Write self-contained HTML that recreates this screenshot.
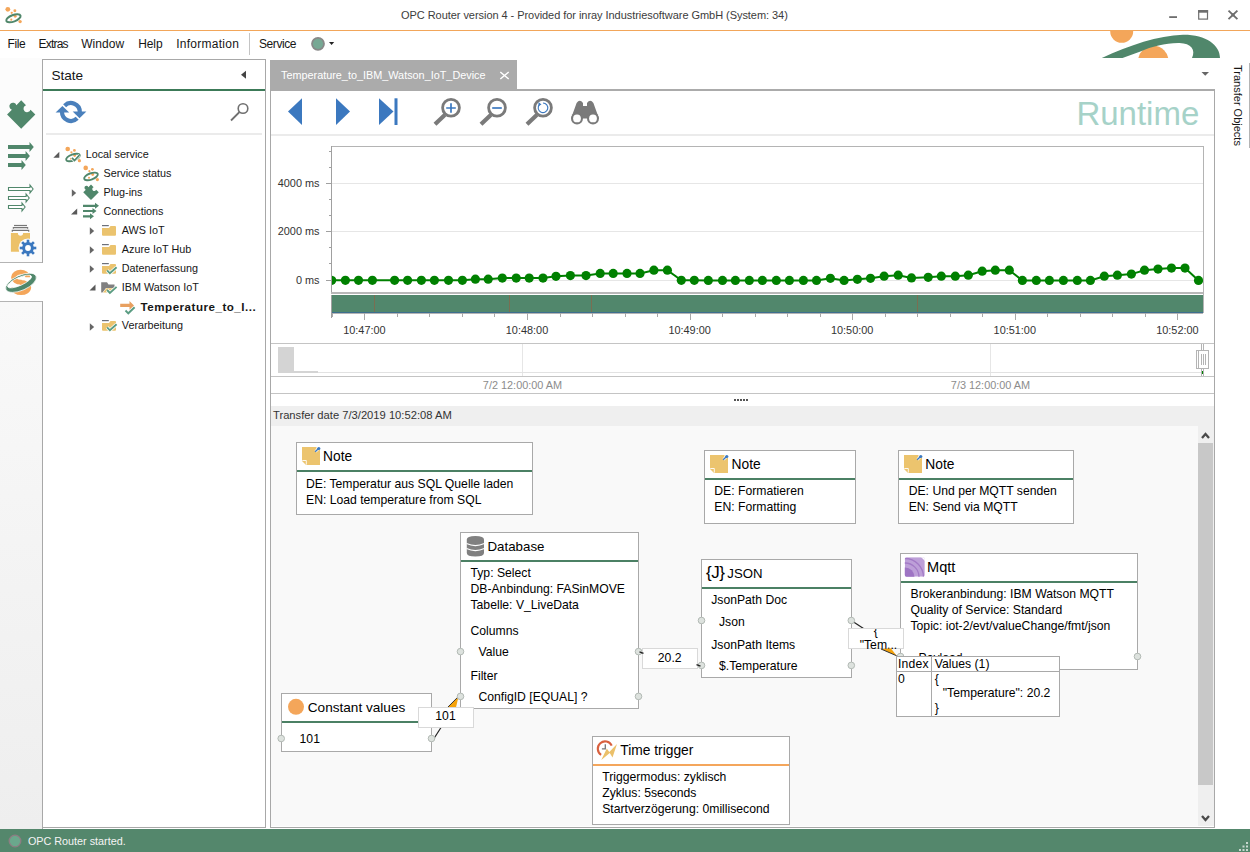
<!DOCTYPE html>
<html><head><meta charset="utf-8">
<style>
html,body{margin:0;padding:0;}
body{width:1250px;height:852px;position:relative;overflow:hidden;background:#fff;font-family:"Liberation Sans",sans-serif;color:#222;}
.a{position:absolute;}
.t{position:absolute;white-space:nowrap;line-height:1;}
svg.s{position:absolute;left:0;top:0;overflow:visible;}
</style></head><body>
<div class="t" style="left:401.0px;top:9.89px;font-size:11px;color:#3c3c3c;letter-spacing:-0.05px;">OPC Router version 4 - Provided for inray Industriesoftware GmbH (System: 34)</div>
<div class="a" style="left:0px;top:30px;width:1250px;height:1px;background:#f2a65a;"></div>
<div class="t" style="left:7.5px;top:37.54px;font-size:12px;color:#161616;letter-spacing:-0.4px;">File</div>
<div class="t" style="left:38.5px;top:37.54px;font-size:12px;color:#161616;letter-spacing:-0.8px;">Extras</div>
<div class="t" style="left:81.2px;top:37.54px;font-size:12px;color:#161616;letter-spacing:0.08px;">Window</div>
<div class="t" style="left:138.2px;top:37.54px;font-size:12px;color:#161616;letter-spacing:-0.1px;">Help</div>
<div class="t" style="left:176.2px;top:37.54px;font-size:12px;color:#161616;letter-spacing:0.27px;">Information</div>
<div class="t" style="left:259.0px;top:37.54px;font-size:12px;color:#161616;letter-spacing:-0.43px;">Service</div>
<div class="a" style="left:249px;top:33px;width:1px;height:22px;background:#c4c4c4;"></div>
<div class="a" style="left:0px;top:58px;width:42px;height:204px;background:#fcfcfc;"></div>
<div class="a" style="left:0px;top:262px;width:42px;height:1px;background:#b4b4b4;"></div>
<div class="a" style="left:0px;top:301px;width:42px;height:1px;background:#b4b4b4;"></div>
<div class="a" style="left:0px;top:302px;width:42px;height:527px;background:linear-gradient(#f9f9f9,#eeeeee);"></div>
<div class="a" style="left:42px;top:59px;width:1px;height:203px;background:#a8a8a8;"></div>
<div class="a" style="left:42px;top:301px;width:1px;height:528px;background:#a8a8a8;"></div>
<div class="a" style="left:42px;top:59px;width:224px;height:769px;background:#fff;box-sizing:border-box;border:1px solid #a8a8a8;"></div>
<div class="a" style="left:42px;top:263px;width:1px;height:38px;background:#fff;"></div>
<div class="t" style="left:51.4px;top:68.79px;font-size:13.6px;color:#161616;">State</div>
<div class="a" style="left:43px;top:89px;width:222px;height:2px;background:#3c7a58;"></div>
<div class="a" style="left:46px;top:133px;width:216px;height:2px;background:#ebebeb;"></div>
<div class="t" style="left:85.7px;top:148.56px;font-size:10.8px;color:#161616;">Local service</div>
<div class="t" style="left:103.5px;top:167.56px;font-size:10.8px;color:#161616;">Service status</div>
<div class="t" style="left:103.5px;top:186.56px;font-size:10.8px;color:#161616;">Plug-ins</div>
<div class="t" style="left:103.5px;top:205.56px;font-size:10.8px;color:#161616;">Connections</div>
<div class="t" style="left:121.8px;top:224.56px;font-size:10.8px;color:#161616;">AWS IoT</div>
<div class="t" style="left:121.8px;top:243.56px;font-size:10.8px;color:#161616;">Azure IoT Hub</div>
<div class="t" style="left:121.8px;top:262.56px;font-size:10.8px;color:#161616;">Datenerfassung</div>
<div class="t" style="left:121.8px;top:281.56px;font-size:10.8px;color:#161616;">IBM Watson IoT</div>
<div class="t" style="left:140.6px;top:300.68px;font-size:11.6px;color:#161616;font-weight:bold;letter-spacing:0.5px;">Temperature_to_I...</div>
<div class="t" style="left:121.8px;top:319.56px;font-size:10.8px;color:#161616;">Verarbeitung</div>
<div class="a" style="left:270px;top:60px;width:247px;height:30px;background:#ababab;"></div>
<div class="t" style="left:281.0px;top:69.92px;font-size:10.85px;color:#fff;">Temperature_to_IBM_Watson_IoT_Device</div>
<div class="a" style="left:270px;top:89px;width:945px;height:739px;background:#fff;box-sizing:border-box;border:1px solid #a8a8a8;border-top:2px solid #ababab;"></div>
<div class="a" style="left:271px;top:134px;width:943px;height:2px;background:#ebebeb;"></div>
<div class="t" style="left:1076.4px;top:97.07px;font-size:33px;color:#a6d2c8;">Runtime</div>
<div class="t" style="left:1232.0px;top:64.99px;font-size:11px;color:#161616;transform-origin:0 0;transform:rotate(90deg) translateY(-11px);">Transfer Objects</div>
<div class="a" style="left:0px;top:829px;width:1250px;height:23px;background:#54876c;"></div>
<div class="t" style="left:27.9px;top:835.86px;font-size:10.8px;color:#f4f4f4;">OPC Router started.</div>
<svg class="s" width="1250" height="852" shape-rendering="crispEdges"><rect x="331.5" y="146.5" width="871.5" height="166" fill="#fff" stroke="#b4b4b4" stroke-width="1"/><line x1="332" y1="183.5" x2="1203" y2="183.5" stroke="#e6e6e6"/><line x1="332" y1="231.5" x2="1203" y2="231.5" stroke="#e6e6e6"/><line x1="332" y1="280.5" x2="1203" y2="280.5" stroke="#e6e6e6"/><line x1="329" y1="167.5" x2="331" y2="167.5" stroke="#a0a0a0"/><line x1="329" y1="199.5" x2="331" y2="199.5" stroke="#a0a0a0"/><line x1="329" y1="215.5" x2="331" y2="215.5" stroke="#a0a0a0"/><line x1="329" y1="247.5" x2="331" y2="247.5" stroke="#a0a0a0"/><line x1="329" y1="263.5" x2="331" y2="263.5" stroke="#a0a0a0"/><line x1="329" y1="151.5" x2="331" y2="151.5" stroke="#a0a0a0"/><line x1="326" y1="183.5" x2="331" y2="183.5" stroke="#a0a0a0"/><line x1="326" y1="231.5" x2="331" y2="231.5" stroke="#a0a0a0"/><line x1="326" y1="280.5" x2="331" y2="280.5" stroke="#a0a0a0"/><line x1="331.5" y1="146" x2="331.5" y2="313" stroke="#a0a0a0"/><rect x="331" y="292" width="872" height="2" fill="#b8b8b8"/><rect x="331" y="294" width="872" height="1" fill="#fff"/><rect x="332" y="295" width="871" height="17" fill="#51876c"/><rect x="332" y="312" width="871" height="1" fill="#3d6f8e"/><rect x="374" y="295" width="1" height="17" fill="#7a6e52"/><rect x="509" y="295" width="1" height="17" fill="#7a6e52"/><rect x="591" y="295" width="1" height="17" fill="#7a6e52"/><rect x="917" y="295" width="1" height="17" fill="#7a6e52"/><line x1="331" y1="313.5" x2="1203" y2="313.5" stroke="#b4b4b4"/><line x1="331.5" y1="313" x2="331.5" y2="318" stroke="#a0a0a0"/><line x1="332.5" y1="313" x2="332.5" y2="317" stroke="#a8a8a8"/><line x1="364.5" y1="313" x2="364.5" y2="320" stroke="#a8a8a8"/><line x1="397.5" y1="313" x2="397.5" y2="317" stroke="#a8a8a8"/><line x1="429.5" y1="313" x2="429.5" y2="317" stroke="#a8a8a8"/><line x1="462.5" y1="313" x2="462.5" y2="317" stroke="#a8a8a8"/><line x1="494.5" y1="313" x2="494.5" y2="317" stroke="#a8a8a8"/><line x1="527.5" y1="313" x2="527.5" y2="320" stroke="#a8a8a8"/><line x1="560.5" y1="313" x2="560.5" y2="317" stroke="#a8a8a8"/><line x1="592.5" y1="313" x2="592.5" y2="317" stroke="#a8a8a8"/><line x1="625.5" y1="313" x2="625.5" y2="317" stroke="#a8a8a8"/><line x1="657.5" y1="313" x2="657.5" y2="317" stroke="#a8a8a8"/><line x1="690.5" y1="313" x2="690.5" y2="320" stroke="#a8a8a8"/><line x1="722.5" y1="313" x2="722.5" y2="317" stroke="#a8a8a8"/><line x1="755.5" y1="313" x2="755.5" y2="317" stroke="#a8a8a8"/><line x1="787.5" y1="313" x2="787.5" y2="317" stroke="#a8a8a8"/><line x1="820.5" y1="313" x2="820.5" y2="317" stroke="#a8a8a8"/><line x1="852.5" y1="313" x2="852.5" y2="320" stroke="#a8a8a8"/><line x1="885.5" y1="313" x2="885.5" y2="317" stroke="#a8a8a8"/><line x1="917.5" y1="313" x2="917.5" y2="317" stroke="#a8a8a8"/><line x1="950.5" y1="313" x2="950.5" y2="317" stroke="#a8a8a8"/><line x1="982.5" y1="313" x2="982.5" y2="317" stroke="#a8a8a8"/><line x1="1015.5" y1="313" x2="1015.5" y2="320" stroke="#a8a8a8"/><line x1="1047.5" y1="313" x2="1047.5" y2="317" stroke="#a8a8a8"/><line x1="1080.5" y1="313" x2="1080.5" y2="317" stroke="#a8a8a8"/><line x1="1112.5" y1="313" x2="1112.5" y2="317" stroke="#a8a8a8"/><line x1="1145.5" y1="313" x2="1145.5" y2="317" stroke="#a8a8a8"/><line x1="1177.5" y1="313" x2="1177.5" y2="320" stroke="#a8a8a8"/></svg>
<div class="t" style="left:319.5px;top:178.07px;font-size:10.9px;color:#333;transform:translateX(-100%);">4000 ms</div>
<div class="t" style="left:319.5px;top:226.27px;font-size:10.9px;color:#333;transform:translateX(-100%);">2000 ms</div>
<div class="t" style="left:319.5px;top:275.17px;font-size:10.9px;color:#333;transform:translateX(-100%);">0 ms</div>
<div class="t" style="left:364.4px;top:324.57px;font-size:10.9px;color:#333;transform:translateX(-50%);">10:47:00</div>
<div class="t" style="left:527.0px;top:324.57px;font-size:10.9px;color:#333;transform:translateX(-50%);">10:48:00</div>
<div class="t" style="left:689.6px;top:324.57px;font-size:10.9px;color:#333;transform:translateX(-50%);">10:49:00</div>
<div class="t" style="left:852.2px;top:324.57px;font-size:10.9px;color:#333;transform:translateX(-50%);">10:50:00</div>
<div class="t" style="left:1014.8px;top:324.57px;font-size:10.9px;color:#333;transform:translateX(-50%);">10:51:00</div>
<div class="t" style="left:1177.4px;top:324.57px;font-size:10.9px;color:#333;transform:translateX(-50%);">10:52:00</div>
<svg class="s" width="1250" height="852"><defs><clipPath id="cc"><rect x="332" y="146" width="871" height="146"/></clipPath></defs><g clip-path="url(#cc)"><path d="M331.7,280.3 L345.4,280.3 L358.5,280.3 L372.4,280.3 L394.6,280.3 L407.6,280.3 L421.4,280.3 L434.4,280.3 L448.5,280.3 L462.4,280.3 L475.4,279.2 L488.2,279.2 L502.3,278.1 L516.2,278.1 L529.2,278.1 L543.0,278.1 L556.0,276.3 L570.4,275.6 L586.0,275.6 L600.2,273.4 L613.2,273.4 L627.0,273.4 L640.0,273.4 L653.9,270.2 L667.4,270.2 L681.3,280.3 L694.3,280.3 L708.3,280.4 L722.5,280.4 L735.4,280.4 L749.3,280.4 L762.4,280.4 L776.3,280.4 L789.4,280.4 L803.4,280.4 L816.5,280.4 L830.4,278.3 L844.1,280.4 L857.4,279.3 L870.5,278.3 L884.1,276.2 L898.2,275.2 L911.5,277.9 L928.2,277.3 L941.3,276.2 L955.3,276.2 L968.3,275.2 L982.2,271.2 L995.3,270.2 L1009.3,270.2 L1022.4,280.4 L1036.3,280.4 L1049.4,280.4 L1063.4,280.4 L1077.3,280.4 L1090.4,280.4 L1104.3,276.2 L1117.4,275.2 L1131.4,274.1 L1144.5,270.2 L1158.0,269.1 L1171.5,268.1 L1185.0,268.1 L1198.5,280.4" fill="none" stroke="#008000" stroke-width="2"/><g fill="#008000"><circle cx="331.7" cy="280.3" r="4.6"/><circle cx="345.4" cy="280.3" r="4.6"/><circle cx="358.5" cy="280.3" r="4.6"/><circle cx="372.4" cy="280.3" r="4.6"/><circle cx="394.6" cy="280.3" r="4.6"/><circle cx="407.6" cy="280.3" r="4.6"/><circle cx="421.4" cy="280.3" r="4.6"/><circle cx="434.4" cy="280.3" r="4.6"/><circle cx="448.5" cy="280.3" r="4.6"/><circle cx="462.4" cy="280.3" r="4.6"/><circle cx="475.4" cy="279.2" r="4.6"/><circle cx="488.2" cy="279.2" r="4.6"/><circle cx="502.3" cy="278.1" r="4.6"/><circle cx="516.2" cy="278.1" r="4.6"/><circle cx="529.2" cy="278.1" r="4.6"/><circle cx="543.0" cy="278.1" r="4.6"/><circle cx="556.0" cy="276.3" r="4.6"/><circle cx="570.4" cy="275.6" r="4.6"/><circle cx="586.0" cy="275.6" r="4.6"/><circle cx="600.2" cy="273.4" r="4.6"/><circle cx="613.2" cy="273.4" r="4.6"/><circle cx="627.0" cy="273.4" r="4.6"/><circle cx="640.0" cy="273.4" r="4.6"/><circle cx="653.9" cy="270.2" r="4.6"/><circle cx="667.4" cy="270.2" r="4.6"/><circle cx="681.3" cy="280.3" r="4.6"/><circle cx="694.3" cy="280.3" r="4.6"/><circle cx="708.3" cy="280.4" r="4.6"/><circle cx="722.5" cy="280.4" r="4.6"/><circle cx="735.4" cy="280.4" r="4.6"/><circle cx="749.3" cy="280.4" r="4.6"/><circle cx="762.4" cy="280.4" r="4.6"/><circle cx="776.3" cy="280.4" r="4.6"/><circle cx="789.4" cy="280.4" r="4.6"/><circle cx="803.4" cy="280.4" r="4.6"/><circle cx="816.5" cy="280.4" r="4.6"/><circle cx="830.4" cy="278.3" r="4.6"/><circle cx="844.1" cy="280.4" r="4.6"/><circle cx="857.4" cy="279.3" r="4.6"/><circle cx="870.5" cy="278.3" r="4.6"/><circle cx="884.1" cy="276.2" r="4.6"/><circle cx="898.2" cy="275.2" r="4.6"/><circle cx="911.5" cy="277.9" r="4.6"/><circle cx="928.2" cy="277.3" r="4.6"/><circle cx="941.3" cy="276.2" r="4.6"/><circle cx="955.3" cy="276.2" r="4.6"/><circle cx="968.3" cy="275.2" r="4.6"/><circle cx="982.2" cy="271.2" r="4.6"/><circle cx="995.3" cy="270.2" r="4.6"/><circle cx="1009.3" cy="270.2" r="4.6"/><circle cx="1022.4" cy="280.4" r="4.6"/><circle cx="1036.3" cy="280.4" r="4.6"/><circle cx="1049.4" cy="280.4" r="4.6"/><circle cx="1063.4" cy="280.4" r="4.6"/><circle cx="1077.3" cy="280.4" r="4.6"/><circle cx="1090.4" cy="280.4" r="4.6"/><circle cx="1104.3" cy="276.2" r="4.6"/><circle cx="1117.4" cy="275.2" r="4.6"/><circle cx="1131.4" cy="274.1" r="4.6"/><circle cx="1144.5" cy="270.2" r="4.6"/><circle cx="1158.0" cy="269.1" r="4.6"/><circle cx="1171.5" cy="268.1" r="4.6"/><circle cx="1185.0" cy="268.1" r="4.6"/><circle cx="1198.5" cy="280.4" r="4.6"/></g></g></svg>
<svg class="s" width="1250" height="852" shape-rendering="crispEdges"><rect x="271" y="343" width="943" height="1" fill="#c4c4c4"/><rect x="271" y="376" width="943" height="1" fill="#c4c4c4"/><rect x="271" y="393" width="943" height="1" fill="#c4c4c4"/><rect x="522" y="344" width="1" height="32" fill="#e6e6e6"/><rect x="990" y="344" width="1" height="32" fill="#e6e6e6"/><rect x="278" y="347" width="16" height="26" fill="#d4d4d4"/><rect x="294" y="371" width="24" height="2" fill="#d4d4d4"/><rect x="318" y="372" width="883" height="1" fill="#e2e2e2"/><rect x="1201" y="344" width="1" height="6" fill="#b4b4b4"/><rect x="1203" y="344" width="1" height="6" fill="#b4b4b4"/><rect x="1201" y="369" width="1" height="7" fill="#b4b4b4"/><rect x="1203" y="369" width="1" height="7" fill="#b4b4b4"/><rect x="1196.5" y="350.5" width="12" height="18" fill="#fff" stroke="#b4b4b4"/><rect x="1198" y="351" width="1" height="17" fill="#b4b4b4"/><rect x="1201" y="354" width="1" height="11" fill="#b4b4b4"/><rect x="1203" y="354" width="1" height="11" fill="#b4b4b4"/><rect x="1205" y="354" width="1" height="11" fill="#b4b4b4"/><rect x="1202" y="371" width="1" height="3" fill="#008000"/></svg>
<div class="t" style="left:522.5px;top:379.77px;font-size:10.9px;color:#8c8c8c;transform:translateX(-50%);">7/2 12:00:00 AM</div>
<div class="t" style="left:990.5px;top:379.77px;font-size:10.9px;color:#8c8c8c;transform:translateX(-50%);">7/3 12:00:00 AM</div>
<svg class="s" width="1250" height="852" shape-rendering="crispEdges"><g fill="#555"><rect x="734" y="399" width="1.5" height="1.5"/><rect x="737" y="399" width="1.5" height="1.5"/><rect x="740" y="399" width="1.5" height="1.5"/><rect x="743" y="399" width="1.5" height="1.5"/><rect x="746" y="399" width="1.5" height="1.5"/></g></svg>
<div class="a" style="left:271px;top:406px;width:943px;height:20px;background:#efefef;"></div>
<div class="t" style="left:273.0px;top:410.32px;font-size:11.2px;color:#333;">Transfer date 7/3/2019 10:52:08 AM</div>
<div class="a" style="left:271px;top:426px;width:927px;height:400px;background:#f9f9f9;"></div>
<div class="a" style="left:1198px;top:426px;width:16px;height:400px;background:#efefef;"></div>
<div class="a" style="left:1198px;top:443px;width:15px;height:342px;background:#c8c8c8;"></div>
<svg class="s" width="1250" height="852"><path d="M1202,438 L1205.5,434 L1209,438" fill="none" stroke="#4a4a4a" stroke-width="2.3"/><path d="M1202,816 L1205.5,820 L1209,816" fill="none" stroke="#4a4a4a" stroke-width="2.3"/></svg>
<svg class="s" width="1250" height="852"><path d="M433.8,738.8 L441,727.5" stroke="#222" stroke-width="1.2" fill="none"/><path d="M447.4,707.6 L458.5,696.4 L456,707.6 Z" fill="#f5a20a" stroke="none"/><path d="M447.4,707.6 L458.5,696.4" stroke="#333" stroke-width="1" fill="none"/><path d="M639,652 L642.5,653.5" stroke="#222" stroke-width="1" fill="none"/><path d="M697.5,665 L701,666" stroke="#222" stroke-width="1" fill="none"/><path d="M851.3,620.5 L863.5,628.5" stroke="#222" stroke-width="1.2" fill="none"/></svg>
<div class="a" style="left:296px;top:442px;width:237px;height:73px;background:#fff;box-sizing:border-box;border:1px solid #a9a9a9;"></div>
<div class="a" style="left:297px;top:470px;width:235px;height:2px;background:#4b8064;"></div>
<div class="t" style="left:323.0px;top:450.32px;font-size:13.8px;color:#000;">Note</div>
<div class="t" style="left:306.0px;top:477.67px;font-size:12.2px;color:#000;">DE: Temperatur aus SQL Quelle laden</div>
<div class="t" style="left:306.0px;top:493.67px;font-size:12.2px;color:#000;">EN: Load temperature from SQL</div>
<div class="a" style="left:704px;top:450px;width:152px;height:74px;background:#fff;box-sizing:border-box;border:1px solid #a9a9a9;"></div>
<div class="a" style="left:705px;top:478px;width:150px;height:2px;background:#4b8064;"></div>
<div class="t" style="left:731.5px;top:458.02px;font-size:13.8px;color:#000;">Note</div>
<div class="t" style="left:714.3px;top:485.27px;font-size:12.2px;color:#000;">DE: Formatieren</div>
<div class="t" style="left:714.3px;top:501.07px;font-size:12.2px;color:#000;">EN: Formatting</div>
<div class="a" style="left:898px;top:450px;width:176px;height:74px;background:#fff;box-sizing:border-box;border:1px solid #a9a9a9;"></div>
<div class="a" style="left:899px;top:478px;width:174px;height:2px;background:#4b8064;"></div>
<div class="t" style="left:925.3px;top:458.02px;font-size:13.8px;color:#000;">Note</div>
<div class="t" style="left:908.7px;top:485.27px;font-size:12.2px;color:#000;">DE: Und per MQTT senden</div>
<div class="t" style="left:908.7px;top:501.07px;font-size:12.2px;color:#000;">EN: Send via MQTT</div>
<div class="a" style="left:460px;top:532px;width:179px;height:177px;background:#fff;box-sizing:border-box;border:1px solid #a9a9a9;"></div>
<div class="a" style="left:461px;top:560px;width:177px;height:2px;background:#4b8064;"></div>
<div class="t" style="left:487.5px;top:540.34px;font-size:13.3px;color:#000;">Database</div>
<div class="t" style="left:470.5px;top:567.37px;font-size:12.2px;color:#000;">Typ: Select</div>
<div class="t" style="left:470.5px;top:583.27px;font-size:12.2px;color:#000;">DB-Anbindung: FASinMOVE</div>
<div class="t" style="left:470.5px;top:599.27px;font-size:12.2px;color:#000;">Tabelle: V_LiveData</div>
<div class="t" style="left:470.5px;top:624.97px;font-size:12.2px;color:#000;">Columns</div>
<div class="t" style="left:478.5px;top:646.07px;font-size:12.2px;color:#000;">Value</div>
<div class="t" style="left:470.5px;top:669.97px;font-size:12.2px;color:#000;">Filter</div>
<div class="t" style="left:478.5px;top:691.37px;font-size:12.2px;color:#000;">ConfigID [EQUAL] ?</div>
<div class="a" style="left:701px;top:559px;width:151px;height:119px;background:#fff;box-sizing:border-box;border:1px solid #a9a9a9;"></div>
<div class="a" style="left:702px;top:587px;width:149px;height:2px;background:#4b8064;"></div>
<div class="t" style="left:706.0px;top:564.11px;font-size:17px;color:#000;letter-spacing:-0.5px;">{J}</div>
<div class="t" style="left:727.3px;top:567.13px;font-size:13.2px;color:#000;">JSON</div>
<div class="t" style="left:711.2px;top:594.47px;font-size:12.2px;color:#000;">JsonPath Doc</div>
<div class="t" style="left:719.0px;top:615.67px;font-size:12.2px;color:#000;">Json</div>
<div class="t" style="left:711.2px;top:639.27px;font-size:12.2px;color:#000;">JsonPath Items</div>
<div class="t" style="left:719.0px;top:660.47px;font-size:12.2px;color:#000;">$.Temperature</div>
<div class="a" style="left:900px;top:553px;width:238px;height:117px;background:#fff;box-sizing:border-box;border:1px solid #a9a9a9;"></div>
<div class="a" style="left:901px;top:581px;width:236px;height:2px;background:#4b8064;"></div>
<div class="t" style="left:927.0px;top:560.04px;font-size:14.6px;color:#000;">Mqtt</div>
<div class="t" style="left:910.5px;top:588.07px;font-size:12.2px;color:#000;">Brokeranbindung: IBM Watson MQTT</div>
<div class="t" style="left:910.5px;top:604.27px;font-size:12.2px;color:#000;">Quality of Service: Standard</div>
<div class="t" style="left:910.5px;top:620.17px;font-size:12.2px;color:#000;">Topic: iot-2/evt/valueChange/fmt/json</div>
<div class="t" style="left:918.5px;top:651.67px;font-size:12.2px;color:#000;">Payload</div>
<div class="a" style="left:281px;top:693px;width:151px;height:59px;background:#fff;box-sizing:border-box;border:1px solid #a9a9a9;"></div>
<div class="a" style="left:282px;top:721px;width:149px;height:2px;background:#4b8064;"></div>
<div class="t" style="left:307.8px;top:700.69px;font-size:13.6px;color:#000;">Constant values</div>
<div class="t" style="left:299.6px;top:733.07px;font-size:12.2px;color:#000;">101</div>
<div class="a" style="left:592px;top:736px;width:198px;height:89px;background:#fff;box-sizing:border-box;border:1px solid #a9a9a9;"></div>
<div class="a" style="left:593px;top:764px;width:196px;height:2px;background:#f4a65c;"></div>
<div class="t" style="left:620.3px;top:744.32px;font-size:13.8px;color:#000;">Time trigger</div>
<div class="t" style="left:602.2px;top:771.37px;font-size:12.2px;color:#000;">Triggermodus: zyklisch</div>
<div class="t" style="left:602.2px;top:786.87px;font-size:12.2px;color:#000;">Zyklus: 5seconds</div>
<div class="t" style="left:602.2px;top:803.27px;font-size:12.2px;color:#000;">Startverzögerung: 0millisecond</div>
<svg class="s" width="1250" height="852"><circle cx="460.5" cy="651.6" r="3.3" fill="#dde2de" stroke="#b3bab5" stroke-width="1"/><circle cx="460.5" cy="696.4" r="3.3" fill="#dde2de" stroke="#b3bab5" stroke-width="1"/><circle cx="638.5" cy="651.6" r="3.3" fill="#dde2de" stroke="#b3bab5" stroke-width="1"/><circle cx="638.5" cy="696.4" r="3.3" fill="#dde2de" stroke="#b3bab5" stroke-width="1"/><circle cx="701.5" cy="620.5" r="3.3" fill="#dde2de" stroke="#b3bab5" stroke-width="1"/><circle cx="701.5" cy="665.4" r="3.3" fill="#dde2de" stroke="#b3bab5" stroke-width="1"/><circle cx="851.3" cy="620.5" r="3.3" fill="#dde2de" stroke="#b3bab5" stroke-width="1"/><circle cx="851.3" cy="665.4" r="3.3" fill="#dde2de" stroke="#b3bab5" stroke-width="1"/><circle cx="281.2" cy="738.5" r="3.3" fill="#dde2de" stroke="#b3bab5" stroke-width="1"/><circle cx="431.5" cy="738.5" r="3.3" fill="#dde2de" stroke="#b3bab5" stroke-width="1"/><circle cx="900.5" cy="656.5" r="3.3" fill="#dde2de" stroke="#b3bab5" stroke-width="1"/><circle cx="1137.5" cy="656.5" r="3.3" fill="#dde2de" stroke="#b3bab5" stroke-width="1"/></svg>
<div class="a" style="left:418px;top:707px;width:56px;height:21px;background:#fff;box-sizing:border-box;border:1px solid #d9d9d9;"></div>
<div class="t" style="left:445.5px;top:710.27px;font-size:12.2px;color:#000;transform:translateX(-50%);">101</div>
<div class="a" style="left:642px;top:648px;width:56px;height:21px;background:#fff;box-sizing:border-box;border:1px solid #d9d9d9;"></div>
<div class="t" style="left:669.7px;top:651.67px;font-size:12.2px;color:#000;transform:translateX(-50%);">20.2</div>
<svg class="s" width="1250" height="852"><path d="M639.5,651.8 L643.5,653.3 M696.5,664.6 L700.5,666.2" stroke="#222" stroke-width="1.3" fill="none"/></svg>
<div class="a" style="left:848px;top:628px;width:56px;height:21px;background:#fff;box-sizing:border-box;border:1px solid #d9d9d9;"></div>
<div class="a" style="left:849px;top:629px;width:60px;height:30px;overflow:hidden"><div class="t" style="left:24.8px;top:-4.03px;font-size:12.2px;color:#000;">{</div>
<div class="t" style="left:10.7px;top:10.07px;font-size:12.2px;color:#000;">"Tem...</div>
</div>
<svg class="s" width="1250" height="852"><path d="M881,649 L896.7,655.8 L891,648.6 Z" fill="#f5a20a"/><path d="M881,649 L896.7,655.8" stroke="#333" stroke-width="1" fill="none"/></svg>
<div class="a" style="left:896px;top:656px;width:164px;height:61px;box-sizing:border-box;border:1px solid #a9a9a9;background:#fff"></div>
<div class="a" style="left:897px;top:671px;width:162px;height:1px;background:#a9a9a9;"></div>
<div class="a" style="left:931px;top:657px;width:1px;height:59px;background:#a9a9a9;"></div>
<div class="t" style="left:898.0px;top:658.17px;font-size:12.2px;color:#000;letter-spacing:0.2px;">Index</div>
<div class="t" style="left:934.8px;top:658.17px;font-size:12.2px;color:#000;">Values (1)</div>
<div class="t" style="left:898.0px;top:672.97px;font-size:12.2px;color:#000;">0</div>
<div class="t" style="left:934.8px;top:672.97px;font-size:12.2px;color:#000;">{</div>
<div class="t" style="left:942.8px;top:687.27px;font-size:12.2px;color:#000;">"Temperature": 20.2</div>
<div class="t" style="left:934.8px;top:702.07px;font-size:12.2px;color:#000;">}</div>
<svg class="s" width="1250" height="852"><g transform="translate(5,6.5) scale(1.05)"><g fill="#f4a65a"><circle cx="2.7" cy="2.7" r="2.3"/><circle cx="9.4" cy="4.1" r="1.4"/><circle cx="6.4" cy="6" r="1.1"/><circle cx="9.7" cy="9.3" r="1.4"/><circle cx="14.4" cy="14.4" r="1.6"/><circle cx="6" cy="12.5" r="1"/></g><ellipse cx="8" cy="11.2" rx="7.2" ry="3.1" transform="rotate(-20 8 11.2)" fill="none" stroke="#50876b" stroke-width="1.9"/></g><rect x="1169.2" y="16.2" width="7.8" height="1.8" fill="#6e6e6e"/><rect x="1198.7" y="10.7" width="8.8" height="8.4" fill="none" stroke="#6e6e6e" stroke-width="1.2"/><rect x="1198.1" y="10.1" width="10" height="2.6" fill="#6e6e6e"/><path d="M1228.5,10.6 L1237.4,19.1 M1237.4,10.6 L1228.5,19.1" stroke="#6e6e6e" stroke-width="1.9"/><rect x="1231.5" y="13.4" width="3" height="3" fill="#6e6e6e"/><circle cx="318" cy="43.8" r="6" fill="#77a894" stroke="#888" stroke-width="1.8"/><path d="M329,42 L334.2,42 L331.6,45 Z" fill="#222"/><defs><clipPath id="lg"><rect x="1095" y="31" width="130" height="27"/></clipPath></defs><g clip-path="url(#lg)"><circle cx="1121.7" cy="31.3" r="11.5" fill="#f4a65a"/><circle cx="1153.3" cy="61" r="15.2" fill="#f4a65a"/><path d="M1101.8,58 C1130,45 1158,35.5 1183,34.7 C1206,34.5 1220,45 1220,58 L1192,58 C1196,50 1191,43.5 1179.6,43.1 C1166,42.8 1152,46.5 1140.4,51.5 L1122.5,58 Z" fill="#50876b"/></g><path d="M500.3,72 L508.7,79 M508.7,72 L500.3,79" stroke="#fff" stroke-width="1.5"/><path d="M1201.5,72 L1209,72 L1205.25,75.8 Z" fill="#666"/><rect x="1249" y="63" width="1" height="85" fill="#b4b4b4"/><g transform="translate(21.2,114.5) rotate(-45)" fill="#50876b"><path d="M-10,-10 L-3.2,-10 A3.6,3.6 0 1 1 3.2,-10 L10,-10 L10,-3.2 A3.6,3.6 0 1 0 10,3.2 L10,10 L-10,10 Z"/></g><path d="M8,145 L29.499999999999996,145 L29.499999999999996,142 L33.8,147 L29.499999999999996,152 L29.499999999999996,149 L8,149 Z" fill="#50876b" transform="translate(0,0)"/><path d="M8,154 L25.599999999999998,154 L25.599999999999998,151 L29.9,156 L25.599999999999998,161 L25.599999999999998,158 L8,158 Z" fill="#50876b" transform="translate(0,0)"/><path d="M8,163 L21.5,163 L21.5,160 L25.8,165 L21.5,170 L21.5,167 L8,167 Z" fill="#50876b" transform="translate(0,0)"/><path d="M8.5,145.5 L29.999999999999996,145.5 L29.999999999999996,143 L33.099999999999994,147 L29.999999999999996,151 L29.999999999999996,148.5 L8.5,148.5 Z" fill="#fff" stroke="#50876b" stroke-width="1.1" transform="translate(0,42)"/><path d="M8.5,154.5 L26.099999999999998,154.5 L26.099999999999998,152 L29.2,156 L26.099999999999998,160 L26.099999999999998,157.5 L8.5,157.5 Z" fill="#fff" stroke="#50876b" stroke-width="1.1" transform="translate(0,42)"/><path d="M8.5,163.5 L22.0,163.5 L22.0,161 L25.1,165 L22.0,169 L22.0,166.5 L8.5,166.5 Z" fill="#fff" stroke="#50876b" stroke-width="1.1" transform="translate(0,42)"/><g fill="none" stroke="#777" stroke-width="1.2"><path d="M14,225.5 L27,225.5"/><path d="M13.4,228.8 L13.4,227.6 L27.6,227.6 L27.6,228.8"/><path d="M12.3,231.7 L12.3,230.4 L28.7,230.4 L28.7,231.7"/></g><path d="M10.9,233 L17.9,233 A2.6,2.8 0 0 0 23.1,233 L30,233 L30,251.8 L10.9,251.8 Z" fill="#ecc168"/><circle cx="28" cy="248" r="9.6" fill="#fcfcfc"/><g transform="translate(28,248)"><rect x="-1.3" y="-8.3" width="2.6" height="4" fill="#3b78bf" transform="rotate(0)"/><rect x="-1.3" y="-8.3" width="2.6" height="4" fill="#3b78bf" transform="rotate(45)"/><rect x="-1.3" y="-8.3" width="2.6" height="4" fill="#3b78bf" transform="rotate(90)"/><rect x="-1.3" y="-8.3" width="2.6" height="4" fill="#3b78bf" transform="rotate(135)"/><rect x="-1.3" y="-8.3" width="2.6" height="4" fill="#3b78bf" transform="rotate(180)"/><rect x="-1.3" y="-8.3" width="2.6" height="4" fill="#3b78bf" transform="rotate(225)"/><rect x="-1.3" y="-8.3" width="2.6" height="4" fill="#3b78bf" transform="rotate(270)"/><rect x="-1.3" y="-8.3" width="2.6" height="4" fill="#3b78bf" transform="rotate(315)"/><circle cx="0" cy="0" r="5.9" fill="#3b78bf"/><circle cx="0" cy="0" r="2.9" fill="#fff"/></g><path d="M27.8,277.2 A7.15,5 0 1 0 20.65,282.2 L21.1,282.5 A7.65,5.1 0 1 1 13.45,287.6" fill="none" stroke="#f4a65a" stroke-width="4.8"/><path fill-rule="evenodd" transform="rotate(-24 21 282.8)" d="M4.5,282.8 A16.5,7.5 0 1 0 37.5,282.8 A16.5,7.5 0 1 0 4.5,282.8 Z M7.2,281 A13,4 0 1 0 33.2,281 A13,4 0 1 0 7.2,281 Z" fill="#50876b" stroke="#fff" stroke-width="0.7"/><path d="M246,70.7 L246,78.8 L241,74.75 Z" fill="#444"/><g fill="none" stroke="#4a80bc" stroke-width="4.2"><path d="M64.6,105.7 A8.9,8.9 0 0 1 79.8,112"/><path d="M62,112 A8.9,8.9 0 0 0 77.2,118.3"/></g><path d="M55.6,112.6 L69.2,112.6 L62.4,105.9 Z" fill="#4a80bc"/><path d="M72.7,111.5 L86.4,111.5 L79.5,118.3 Z" fill="#4a80bc"/><circle cx="243" cy="108.5" r="4.8" fill="none" stroke="#707070" stroke-width="1.6"/><path d="M239.5,112 L231,120.5" stroke="#707070" stroke-width="1.8"/><path d="M53.3,157.8 L59.3,157.8 L59.3,151.8 Z" fill="#5a5a5a"/><path d="M71,214.6 L77.2,214.6 L77.2,208.4 Z" fill="#5a5a5a"/><path d="M89.5,290.6 L95.5,290.6 L95.5,284.6 Z" fill="#5a5a5a"/><path d="M71.8,189.2 L76.2,193 L71.8,196.8 Z" fill="#666"/><path d="M89.8,227.2 L94.2,231 L89.8,234.8 Z" fill="#666"/><path d="M89.8,246.2 L94.2,250 L89.8,253.8 Z" fill="#666"/><path d="M89.8,265.2 L94.2,269 L89.8,272.8 Z" fill="#666"/><path d="M89.8,323.2 L94.2,327 L89.8,330.8 Z" fill="#666"/><g transform="translate(65,146.3) scale(1.0)"><g fill="#f4a65a"><circle cx="2.7" cy="2.7" r="2.3"/><circle cx="9.4" cy="4.1" r="1.4"/><circle cx="6.4" cy="6" r="1.1"/><circle cx="9.7" cy="9.3" r="1.4"/><circle cx="14.4" cy="14.4" r="1.6"/><circle cx="6" cy="12.5" r="1"/></g><ellipse cx="8" cy="11.2" rx="7.2" ry="3.1" transform="rotate(-20 8 11.2)" fill="none" stroke="#50876b" stroke-width="1.9"/><path d="M7,11.5 L9.5,14.2 L14.5,8.8" fill="none" stroke="#fff" stroke-width="3.2"/><path d="M7,11.5 L9.5,14.2 L14.5,8.8" fill="none" stroke="#50876b" stroke-width="1.7"/></g><g transform="translate(83,165.2) scale(1.0)"><g fill="#f4a65a"><circle cx="2.7" cy="2.7" r="2.3"/><circle cx="9.4" cy="4.1" r="1.4"/><circle cx="6.4" cy="6" r="1.1"/><circle cx="9.7" cy="9.3" r="1.4"/><circle cx="14.4" cy="14.4" r="1.6"/><circle cx="6" cy="12.5" r="1"/></g><ellipse cx="8" cy="11.2" rx="7.2" ry="3.1" transform="rotate(-20 8 11.2)" fill="none" stroke="#50876b" stroke-width="1.9"/></g><g transform="translate(91,192.3) rotate(-45) scale(0.55)" fill="#50876b"><path d="M-10,-10 L-3.2,-10 A3.6,3.6 0 1 1 3.2,-10 L10,-10 L10,-3.2 A3.6,3.6 0 1 0 10,3.2 L10,10 L-10,10 Z"/></g><path d="M83,204.70000000000002 L95,204.70000000000002 L95,202.8 L99,205.8 L95,208.8 L95,206.9 L83,206.9 Z" fill="#50876b"/><path d="M83,209.9 L92.5,209.9 L92.5,208 L96.5,211 L92.5,214 L92.5,212.1 L83,212.1 Z" fill="#50876b"/><path d="M83,215.20000000000002 L90,215.20000000000002 L90,213.3 L94,216.3 L90,219.3 L90,217.4 L83,217.4 Z" fill="#50876b"/><g transform="translate(102,225.4)"><rect x="0" y="-0.4" width="6.8" height="1.2" fill="#6c707a"/><path d="M0,2.5 L7,2.5 L8.5,0.5 L13,0.5 Q14,0.5 14,1.5 L14,9.3 Q14,10.3 13,10.3 L1,10.3 Q0,10.3 0,9.3 Z" fill="#ebc36e"/></g><g transform="translate(102,244.4)"><rect x="0" y="-0.4" width="6.8" height="1.2" fill="#6c707a"/><path d="M0,2.5 L7,2.5 L8.5,0.5 L13,0.5 Q14,0.5 14,1.5 L14,9.3 Q14,10.3 13,10.3 L1,10.3 Q0,10.3 0,9.3 Z" fill="#ebc36e"/></g><g transform="translate(102,263.4)"><rect x="0" y="-0.4" width="6.8" height="1.2" fill="#6c707a"/><path d="M0,2.5 L7,2.5 L8.5,0.5 L13,0.5 Q14,0.5 14,1.5 L14,9.3 Q14,10.3 13,10.3 L1,10.3 Q0,10.3 0,9.3 Z" fill="#ebc36e"/><path d="M5.1,7 L7.9,9.9 L14.6,3.9" fill="none" stroke="#fff" stroke-width="3.4"/><path d="M5.1,7 L7.9,9.9 L14.6,3.9" fill="none" stroke="#5a9c82" stroke-width="1.9"/></g><g transform="translate(102,320.4)"><rect x="0" y="-0.4" width="6.8" height="1.2" fill="#6c707a"/><path d="M0,2.5 L7,2.5 L8.5,0.5 L13,0.5 Q14,0.5 14,1.5 L14,9.3 Q14,10.3 13,10.3 L1,10.3 Q0,10.3 0,9.3 Z" fill="#ebc36e"/><path d="M5.1,7 L7.9,9.9 L14.6,3.9" fill="none" stroke="#fff" stroke-width="3.4"/><path d="M5.1,7 L7.9,9.9 L14.6,3.9" fill="none" stroke="#5a9c82" stroke-width="1.9"/></g><path d="M101.2,282.3 L107,282.3 L108.5,284.5 L114.5,284.5 L114.5,288 L106,288 L102.5,292.5 L101.2,292.5 Z" fill="#808080"/><path d="M103,292.5 L106.5,288.3 L114,288.3 L111,292.5 Z" fill="#ebc36e"/><path d="M107.1,290 L109.9,292.9 L116.6,286.9" fill="none" stroke="#fff" stroke-width="3.4"/><path d="M107.1,290 L109.9,292.9 L116.6,286.9" fill="none" stroke="#5a9c82" stroke-width="1.9"/><path d="M120.2,303.8 L129.5,303.8 L129.5,301 L134,305.4 L129.5,309.8 L129.5,307 L120.2,307 Z" fill="#e8a060"/><path d="M125.5,310.5 L128.3,313.3 L134.6,307.3" fill="none" stroke="#fff" stroke-width="3.2"/><path d="M125.5,310.5 L128.3,313.3 L134.6,307.3" fill="none" stroke="#5a9c82" stroke-width="1.9"/><path d="M302,98.3 L302,125 L288,111.6 Z" fill="#3b78bf"/><path d="M336,98.3 L336,125 L350,111.6 Z" fill="#3b78bf"/><path d="M379,98.3 L379,125 L393.5,111.6 Z" fill="#3b78bf"/><rect x="394.5" y="98.3" width="3" height="26.7" fill="#3b78bf"/><path d="M445,114.8 L435,124.3" stroke="#7a7a7a" stroke-width="4.2"/><circle cx="451" cy="107.8" r="8.4" fill="#fff" stroke="#7a7a7a" stroke-width="2.8"/><path d="M446.2,108 L455.8,108 M451,103.2 L451,112.8" stroke="#3b78bf" stroke-width="1.7"/><path d="M491,114.8 L481,124.3" stroke="#7a7a7a" stroke-width="4.2"/><circle cx="497" cy="107.8" r="8.4" fill="#fff" stroke="#7a7a7a" stroke-width="2.8"/><path d="M492.2,108 L501.8,108" stroke="#3b78bf" stroke-width="1.7"/><path d="M537,114.8 L527,124.3" stroke="#7a7a7a" stroke-width="4.2"/><circle cx="543" cy="107.8" r="8.4" fill="#fff" stroke="#7a7a7a" stroke-width="2.8"/><path d="M539.5,104.5 A4.8,4.8 0 1 0 543,103" fill="none" stroke="#3b78bf" stroke-width="1.1"/><path d="M538.5,102 L541.5,104.5 L538.5,106 Z" fill="#3b78bf"/><g fill="#7a7a7a"><path d="M576.6,103 Q579.8,98.5 583,103 L583,106 L587,106 L587,103 Q590.2,98.5 593.4,103 L599,118.4 L571,118.4 Z"/><circle cx="577" cy="118.4" r="6"/><circle cx="593" cy="118.4" r="6"/></g><circle cx="577" cy="118.4" r="3.9" fill="#fff"/><circle cx="593" cy="118.4" r="3.9" fill="#fff"/><g transform="translate(302,447)"><path d="M0,0 L14.5,0 L14.5,3 L18,3 L18,18 L4,18 L0,14 Z" fill="#ecc46e"/><path d="M0.3,13.5 L4.3,13.5 L4.3,17.7" fill="none" stroke="#fff" stroke-width="0.9"/><path d="M13.5,4.5 L17,1" stroke="#fff" stroke-width="2.6"/><path d="M13.2,4.8 L16.5,1.5" stroke="#3b78bf" stroke-width="1.4"/><circle cx="16.8" cy="1.5" r="1.6" fill="#3b78bf"/></g><g transform="translate(710,455)"><path d="M0,0 L14.5,0 L14.5,3 L18,3 L18,18 L4,18 L0,14 Z" fill="#ecc46e"/><path d="M0.3,13.5 L4.3,13.5 L4.3,17.7" fill="none" stroke="#fff" stroke-width="0.9"/><path d="M13.5,4.5 L17,1" stroke="#fff" stroke-width="2.6"/><path d="M13.2,4.8 L16.5,1.5" stroke="#3b78bf" stroke-width="1.4"/><circle cx="16.8" cy="1.5" r="1.6" fill="#3b78bf"/></g><g transform="translate(904,455)"><path d="M0,0 L14.5,0 L14.5,3 L18,3 L18,18 L4,18 L0,14 Z" fill="#ecc46e"/><path d="M0.3,13.5 L4.3,13.5 L4.3,17.7" fill="none" stroke="#fff" stroke-width="0.9"/><path d="M13.5,4.5 L17,1" stroke="#fff" stroke-width="2.6"/><path d="M13.2,4.8 L16.5,1.5" stroke="#3b78bf" stroke-width="1.4"/><circle cx="16.8" cy="1.5" r="1.6" fill="#3b78bf"/></g><path d="M466.8,539.5 Q466.8,536 475.4,536 Q484,536 484,539.5 L484,553 Q484,556.5 475.4,556.5 Q466.8,556.5 466.8,553 Z" fill="#808080"/><path d="M466.5,543.6 Q475.4,547.6 484.3,543.6 M466.5,548.6 Q475.4,552.6 484.3,548.6" fill="none" stroke="#fff" stroke-width="1.1"/><defs><clipPath id="mq"><rect x="904.8" y="557.2" width="20" height="19.5" rx="1.8"/></clipPath></defs><g clip-path="url(#mq)"><rect x="904.8" y="557.2" width="20" height="19.5" fill="#bd9fd8"/><circle cx="905" cy="577" r="9.5" fill="#9e74c4"/><g fill="none" stroke="#a37ac6" stroke-width="1.3"><circle cx="905" cy="577" r="14"/><circle cx="905" cy="577" r="18.5"/></g><path d="M921,557 L925,557 L925,561 Z" fill="#fff"/></g><circle cx="296" cy="706.8" r="8" fill="#f4a65a"/><path d="M611.7,745.6 A7.3,7.3 0 1 0 601.1,754.8" fill="none" stroke="#d9603e" stroke-width="2.1"/><path d="M605.3,744.3 L605.3,748.8 L601.9,748.8" fill="none" stroke="#777" stroke-width="1.3"/><path d="M617,744 L612.5,757.5 L609.8,753 L601.3,760 L606.8,748.5 L609.3,752 Z" fill="#ebc06a"/><circle cx="15" cy="841" r="5.8" fill="#6aa88c" stroke="#8e7d83" stroke-width="1.3"/><rect x="1246" y="842" width="2" height="2" fill="#c8d8cf"/><rect x="1246" y="845.5" width="2" height="2" fill="#c8d8cf"/><rect x="1242.5" y="845.5" width="2" height="2" fill="#c8d8cf"/><rect x="1246" y="849" width="2" height="2" fill="#c8d8cf"/><rect x="1242.5" y="849" width="2" height="2" fill="#c8d8cf"/><rect x="1239" y="849" width="2" height="2" fill="#c8d8cf"/></svg>
</body></html>
